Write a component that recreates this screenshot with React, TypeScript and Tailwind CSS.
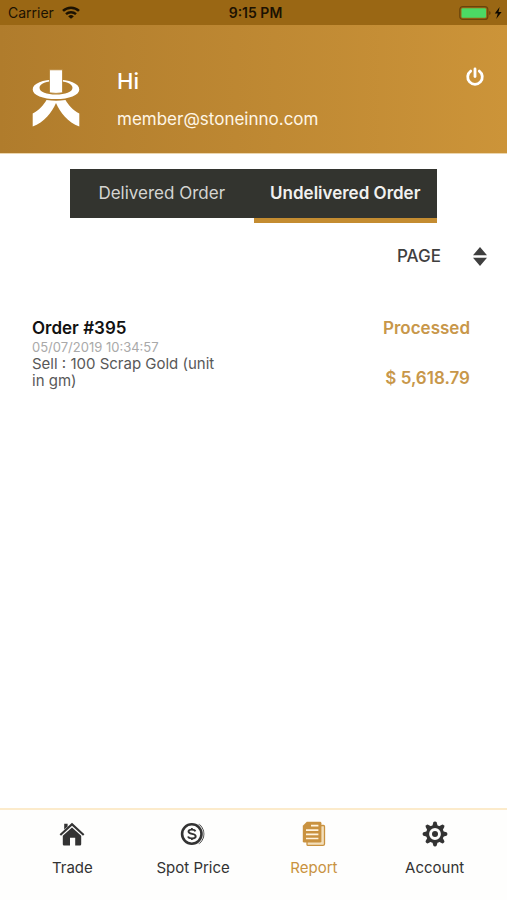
import { useState } from 'react';
import type { ReactNode } from 'react';
import clsx from 'clsx';

function WifiIcon() {
  return (
    <svg viewBox="0 0 18 13" className="h-[13px] w-[18px]" fill="none" stroke="currentColor" aria-hidden="true">
      <path d="M1 4.9A11.6 11.6 0 0 1 17 4.9" strokeWidth="2.6" />
      <path d="M4 8.2A7.2 7.2 0 0 1 14 8.2" strokeWidth="2.4" />
      <path d="M9 12.8 6.2 10.4A4 4 0 0 1 11.8 10.4Z" fill="currentColor" stroke="none" />
    </svg>
  );
}

function BatteryIcon() {
  return (
    <svg viewBox="0 0 44 16" className="h-4 w-11" aria-hidden="true">
      <rect x="0.8" y="1.6" width="28" height="12.8" rx="3" fill="none" stroke="#69440c" strokeWidth="1.2" />
      <rect x="2.5" y="3.3" width="24.6" height="9.4" rx="1.2" fill="#4cd964" />
      <path d="M30.2 6v4q1.5-.6 1.5-2t-1.5-2Z" fill="#69440c" />
      <path d="M40.6 2 35.8 8.6h3L37.2 14l5.4-7h-3.1Z" fill="#0d0800" />
    </svg>
  );
}

function Logo() {
  return (
    <svg viewBox="0 0 48 58" className="h-[58px] w-12" fill="#fff" aria-hidden="true">
      <path
        fillRule="evenodd"
        d="M24 10.6C37 10.6 47.3 14.6 47.3 20.4S37 30 24 30 .7 26.2 .7 20.4 11 10.6 24 10.6ZM24 12C14.8 12 7.5 14.4 7.5 18.8S14.8 25.6 24 25.6s16.5-2.400 16.5-6.800S33.200 12 24 12Z"
      />
      <path d="M17.500 .8H30.500V23.800Q24 25 17.500 23.800Z" stroke="#b5822f" strokeWidth="0.8" />
      <path d="M14.500 31Q24 32.400 33.500 31C36.500 36 41 41.500 47.300 44.500V57.500C36 53.500 28 43.500 24 34 20 43.500 12 53.500 .7 57.500V44.500C7 41.500 11.500 36 14.500 31Z" />
    </svg>
  );
}

function PowerIcon() {
  return (
    <svg viewBox="0 0 20 20" className="size-5" fill="none" stroke="#fff" strokeWidth="2.800" aria-hidden="true">
      <path d="M5.700 4.100A7.300 7.300 0 1 0 14.300 4.100" strokeLinecap="round" />
      <path d="M10 2V9.500" strokeLinecap="round" />
    </svg>
  );
}

function HomeIcon() {
  return (
    <svg viewBox="0 0 26 26" className="size-[26px]" fill="currentColor" aria-hidden="true">
      <path d="M5.200 2.800H8.600V5.400L5.200 8.600Z" />
      <path d="M13 1.800 25.400 13.200 24 14.700 13 4.800 2 14.700 .6 13.200Z" />
      <path d="M13 6.400 22.200 14.700V23.200Q22.200 24.400 21 24.400H16.200V16.800H11V24.400H5Q3.800 24.400 3.800 23.200V14.700Z" />
    </svg>
  );
}

function CoinIcon() {
  return (
    <svg viewBox="0 0 26 26" className="size-[26px]" fill="none" stroke="currentColor" aria-hidden="true">
      <path d="M18 3.800A12 12 0 0 1 18 22.200" strokeWidth="3.200" opacity="0.450" />
      <path d="M19.600 3.800A12 12 0 0 1 19.600 22.200" strokeWidth="0.900" />
      <circle cx="11.800" cy="13" r="11.600" fill="#fefefd" stroke="none" />
      <circle cx="11.800" cy="13" r="9.700" strokeWidth="2.600" />
      <path d="M15.400 10.400Q14.700 8.600 11.800 8.600 8.500 8.600 8.500 10.600C8.500 13.800 15.700 11.900 15.700 15.200Q15.700 17.400 12 17.400 8.700 17.400 8 15.500" strokeWidth="1.900" />
      <path d="M11.900 7V8.600M11.900 17.400V19" strokeWidth="1.700" />
    </svg>
  );
}

function ReportIcon() {
  return (
    <svg viewBox="0 0 26 26" className="size-[26px]" aria-hidden="true">
      <path d="M20 4.500H22.500Q23.500 4.500 23.500 5.500V23Q23.500 24.400 22 24.400H7Q6 24.400 6 23.400V21Z" fill="#f3dfbb" stroke="currentColor" strokeWidth="1.300" />
      <path d="M5.800 .8H19Q20.400 .8 20.400 2.200V20.200Q20.400 21.600 19 21.600H3.200Q1.800 21.600 1.800 20.200V4.800Z" fill="currentColor" />
      <path d="M10 4.700H17.400M5 9.100H17.400M5 13.300H17.400M5 17.500H17.400" stroke="#fff4df" strokeWidth="1.700" />
    </svg>
  );
}

const GEAR_ANGLES = [0, 45, 90, 135, 180, 225, 270, 315];

function GearIcon() {
  return (
    <svg viewBox="0 0 26 26" className="size-[26px]" aria-hidden="true">
      <circle cx="13" cy="13" r="7.500" fill="none" stroke="currentColor" strokeWidth="3.200" />
      {GEAR_ANGLES.map((angle) => (
        <path
          key={angle}
          d="M10.300 5.200 11.300 1.500Q11.700 .6 13 .6T14.700 1.500L15.700 5.200Z"
          fill="currentColor"
          transform={`rotate(${angle} 13 13)`}
        />
      ))}
      <circle cx="13" cy="13" r="3" fill="currentColor" />
    </svg>
  );
}

interface NavItem {
  label: string;
  icon: ReactNode;
}

const NAV_ITEMS: NavItem[] = [
  { label: 'Trade', icon: <HomeIcon /> },
  { label: 'Spot Price', icon: <CoinIcon /> },
  { label: 'Report', icon: <ReportIcon /> },
  { label: 'Account', icon: <GearIcon /> },
];

const TABS = ['Delivered Order', 'Undelivered Order'];

const ORDERS = [
  {
    id: 395,
    date: '05/07/2019 10:34:57',
    detail: 'Sell : 100 Scrap Gold (unit in gm)',
    status: 'Processed',
    total: '$ 5,618.79',
  },
];

export default function App() {
  const [tab, setTab] = useState('Undelivered Order');

  return (
    <div className="flex min-h-screen flex-col bg-white font-['Inter',sans-serif] text-[#3f3f3f]">
      {/* Status bar */}
      <div className="grid h-[25px] grid-cols-3 items-center bg-[#9a6714] pr-1 pl-2 text-sm text-[#1c1202]">
        <div className="flex items-center gap-2">
          <span>Carrier</span>
          <WifiIcon />
        </div>
        <span className="text-center font-semibold">9:15 PM</span>
        <div className="flex justify-end">
          <BatteryIcon />
        </div>
      </div>

      {/* Member header */}
      <header className="flex h-[129px] items-start border-b border-[#ecd6ae] bg-linear-to-r from-[#b07c2c] to-[#cc9439] pr-[22px] pl-8 text-white">
        <div className="pt-11">
          <Logo />
        </div>
        <div className="flex-1 pt-10 pl-[37px]">
          <h1 className="text-[22px] leading-8 font-medium">Hi</h1>
          <p className="mt-[10px] text-[17px] leading-6 text-[#fff6e6]">member@stoneinno.com</p>
        </div>
        <button type="button" aria-label="Log out" className="mt-[42px]">
          <PowerIcon />
        </button>
      </header>

      <main className="flex-1">
        <div className="mx-[70px] mt-[15px] flex" role="tablist">
          {TABS.map((name) => (
            <button
              key={name}
              type="button"
              role="tab"
              aria-selected={tab === name}
              onClick={() => setTab(name)}
              className="flex-1 whitespace-nowrap"
            >
              <span
                className={clsx(
                  'flex h-[49px] items-center justify-center bg-[#33342f] text-[17px]',
                  tab === name ? 'font-semibold text-[#f1f1ef]' : 'text-[#d5d5d2]'
                )}
              >
                {name}
              </span>
              <span className={clsx('block h-[5px]', tab === name && 'bg-[#c48c31]')} />
            </button>
          ))}
        </div>

        <div className="mt-4 flex justify-end pr-5">
          <div className="relative">
            <select
              aria-label="Page"
              className="h-9 w-[90px] appearance-none bg-transparent text-[17px] font-medium text-[#3f3f3f]"
            >
              <option>PAGE</option>
            </select>
            <svg viewBox="0 0 14 20" className="pointer-events-none absolute top-2 right-0 h-5 w-3.5" fill="#3f3f3f" aria-hidden="true">
              <path d="M7 0 14 8.200H0ZM0 10.800H14L7 19Z" />
            </svg>
          </div>
        </div>

        <ul className="mt-[42px] pr-[37px] pl-8">
          {ORDERS.map((order) => (
            <li key={order.id} className="flex justify-between">
              <div className="w-[190px]">
                <h2 className="text-[17px] leading-[22px] font-semibold text-[#111]">Order #{order.id}</h2>
                <p className="text-[13px] leading-4 text-[#a9a9a9]">{order.date}</p>
                <p className="text-[15px] leading-[17px] text-[#585858]">{order.detail}</p>
              </div>
              <div className="flex flex-col justify-between text-right text-[17px] leading-[22px] font-semibold text-[#c8974a]">
                <span>{order.status}</span>
                <span>{order.total}</span>
              </div>
            </li>
          ))}
        </ul>
      </main>

      {/* Bottom navigation */}
      <nav className="flex h-[92px] border-t-2 border-[#fcebcb] bg-[#fefefd] px-3 pt-[11px]">
        {NAV_ITEMS.map(({ label, icon }) => (
          <a
            key={label}
            href="#"
            className={clsx(
              'flex flex-1 flex-col items-center gap-[9px] text-[15px] leading-6',
              label === 'Report' ? 'text-[#c99240]' : 'text-[#333]'
            )}
          >
            {icon}
            {label}
          </a>
        ))}
      </nav>
    </div>
  );
}
